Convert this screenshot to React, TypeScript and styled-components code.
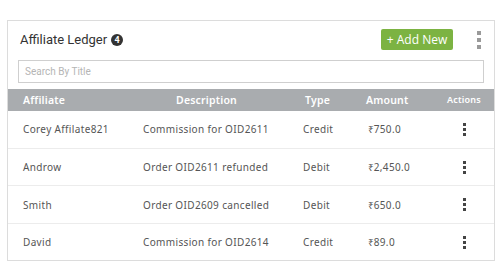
import React from "react";
import styled, { createGlobalStyle } from "styled-components";

const Global = createGlobalStyle`
  html, body { margin: 0; padding: 0; background: #fff; }
  * { box-sizing: border-box; }
`;

const Page = styled.div`
  padding: 20px 0 0 7px;
`;

const Card = styled.div`
  width: 488px;
  height: 241px;
  border: 1px solid #dcdcdc;
  background: #fff;
  display: flex;
  flex-direction: column;
`;

const Top = styled.div`
  padding: 8px 9px 0 10px;
`;

const TitleRow = styled.div`
  display: flex;
  align-items: center;
  height: 21px;
`;

const Title = styled.div`
  margin-left: 2px;
  font-family: Roboto, "Liberation Sans", sans-serif;
  font-size: 13px;
  color: #333;
  display: flex;
  align-items: center;
  gap: 4px;
`;

const Badge = styled.span`
  width: 12px;
  height: 12px;
  border-radius: 50%;
  background: #333;
  color: #fff;
  font-family: Roboto, sans-serif;
  font-size: 9px;
  font-weight: 700;
  display: inline-flex;
  align-items: center;
  justify-content: center;
`;

const Spacer = styled.div`
  flex: 1;
`;

const AddButton = styled.button`
  width: 72px;
  height: 21px;
  border: none;
  border-radius: 2px;
  background: #7cb342;
  color: #fff;
  font-family: "Open Sans", Roboto, sans-serif;
  font-size: 12px;
  padding: 0;
  cursor: pointer;
`;

const Dots = styled.div<{ $size: number; $gap: number; $color: string }>`
  display: flex;
  flex-direction: column;
  gap: ${(p) => p.$gap}px;
  span {
    display: block;
    width: ${(p) => p.$size}px;
    height: ${(p) => p.$size}px;
    background: ${(p) => p.$color};
  }
`;

const TopDots = styled(Dots)`
  margin-left: 24px;
  margin-right: 4px;
`;

const Search = styled.input`
  display: block;
  margin-top: 10px;
  width: 466px;
  height: 23px;
  border: 1px solid #cfcfcf;
  padding: 0 6px;
  font-family: Roboto, sans-serif;
  font-size: 10px;
  color: #333;
  outline: none;
  &::placeholder { color: #b5b5b5; }
`;

const cols = "127px 160px 63px 77px 58px";

const HeadRow = styled.div`
  margin-top: 6px;
  display: grid;
  grid-template-columns: ${cols};
  height: 22px;
  align-items: center;
  background: #a9acaf;
  color: #fff;
  font-family: "Noto Sans", "DejaVu Sans", sans-serif;
  font-weight: 600;
  font-size: 10.5px;
  letter-spacing: 0.2px;
`;

const HeadCell = styled.div<{ $pl?: number; $center?: boolean }>`
  padding-left: ${(p) => p.$pl ?? 0}px;
  text-align: ${(p) => (p.$center ? "center" : "left")};
  font-size: ${(p) => (p.$center ? 9 : 10.5)}px;
`;

const Row = styled.div<{ $last?: boolean }>`
  display: grid;
  grid-template-columns: ${cols};
  height: ${(p) => (p.$last ? 36 : 38)}px;
  align-items: center;
  border-bottom: ${(p) => (p.$last ? "none" : "1px solid #ececec")};
  font-family: "Noto Sans", "DejaVu Sans", sans-serif;
  font-size: 10px;
  letter-spacing: 0.35px;
  color: #555;
`;

const Cell = styled.div<{ $pl?: number }>`
  padding-left: ${(p) => p.$pl ?? 0}px;
  white-space: nowrap;
`;

const Rupee = styled.span`
  margin-right: 0;
  letter-spacing: 0;
`;

const ActionCell = styled.div`
  display: flex;
  justify-content: center;
`;

const data = [
  ["Corey Affilate821", "Commission for OID2611", "Credit", "750.0"],
  ["Androw", "Order OID2611 refunded", "Debit", "2,450.0"],
  ["Smith", "Order OID2609 cancelled", "Debit", "650.0"],
  ["David", "Commission for OID2614", "Credit", "89.0"],
];

export default function App() {
  return (
    <Page>
      <Global />
      <Card>
        <Top>
          <TitleRow>
            <Title>
              Affiliate Ledger <Badge>4</Badge>
            </Title>
            <Spacer />
            <AddButton>+ Add New</AddButton>
            <TopDots $size={4} $gap={3} $color="#9a9a9a">
              <span />
              <span />
              <span />
            </TopDots>
          </TitleRow>
          <Search placeholder="Search By Title" />
        </Top>
        <HeadRow>
          <HeadCell $pl={15}>Affiliate</HeadCell>
          <HeadCell $pl={41}>Description</HeadCell>
          <HeadCell $pl={10}>Type</HeadCell>
          <HeadCell $pl={8}>Amount</HeadCell>
          <HeadCell $center>Actions</HeadCell>
        </HeadRow>
        {data.map((r, i) => (
          <Row key={i} $last={i === data.length - 1}>
            <Cell $pl={15}>{r[0]}</Cell>
            <Cell $pl={8}>{r[1]}</Cell>
            <Cell $pl={8}>{r[2]}</Cell>
            <Cell $pl={10}>
              <Rupee>₹</Rupee>
              {r[3]}
            </Cell>
            <ActionCell>
              <Dots $size={3} $gap={2} $color="#444">
                <span />
                <span />
                <span />
              </Dots>
            </ActionCell>
          </Row>
        ))}
      </Card>
    </Page>
  );
}
